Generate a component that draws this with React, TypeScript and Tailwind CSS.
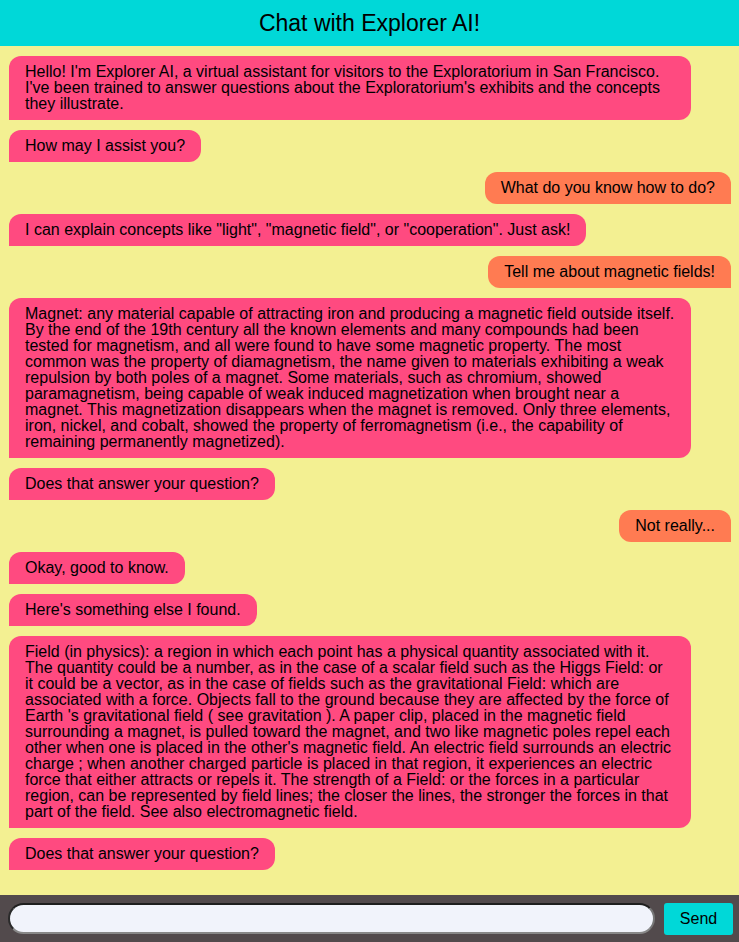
import { useState } from "react";

type Msg = { from: "bot" | "user"; text: string };

const messages: Msg[] = [
  {
    from: "bot",
    text: "Hello! I'm Explorer AI, a virtual assistant for visitors to the Exploratorium in San Francisco. I've been trained to answer questions about the Exploratorium's exhibits and the concepts they illustrate.",
  },
  { from: "bot", text: "How may I assist you?" },
  { from: "user", text: "What do you know how to do?" },
  {
    from: "bot",
    text: 'I can explain concepts like "light", "magnetic field", or "cooperation". Just ask!',
  },
  { from: "user", text: "Tell me about magnetic fields!" },
  {
    from: "bot",
    text: "Magnet: any material capable of attracting iron and producing a magnetic field outside itself. By the end of the 19th century all the known elements and many compounds had been tested for magnetism, and all were found to have some magnetic property. The most common was the property of diamagnetism, the name given to materials exhibiting a weak repulsion by both poles of a magnet. Some materials, such as chromium, showed paramagnetism, being capable of weak induced magnetization when brought near a magnet. This magnetization disappears when the magnet is removed. Only three elements, iron, nickel, and cobalt, showed the property of ferromagnetism (i.e., the capability of remaining permanently magnetized).",
  },
  { from: "bot", text: "Does that answer your question?" },
  { from: "user", text: "Not really..." },
  { from: "bot", text: "Okay, good to know." },
  { from: "bot", text: "Here's something else I found." },
  {
    from: "bot",
    text: "Field (in physics): a region in which each point has a physical quantity associated with it. The quantity could be a number, as in the case of a scalar field such as the Higgs Field: or it could be a vector, as in the case of fields such as the gravitational Field: which are associated with a force. Objects fall to the ground because they are affected by the force of Earth 's gravitational field ( see gravitation ). A paper clip, placed in the magnetic field surrounding a magnet, is pulled toward the magnet, and two like magnetic poles repel each other when one is placed in the other's magnetic field. An electric field surrounds an electric charge ; when another charged particle is placed in that region, it experiences an electric force that either attracts or repels it. The strength of a Field: or the forces in a particular region, can be represented by field lines; the closer the lines, the stronger the forces in that part of the field. See also electromagnetic field.",
  },
  { from: "bot", text: "Does that answer your question?" },
];

export default function App() {
  const [draft, setDraft] = useState("");

  return (
    <div className="flex h-screen flex-col bg-[#f3f092] font-['Liberation_Sans',Arial,sans-serif] text-black">
      {/* Header */}
      <header className="flex h-[46px] shrink-0 items-center justify-center bg-[#00d8d8]">
        <h1 className="text-[23px] leading-none">Chat with Explorer AI!</h1>
      </header>

      {/* Messages */}
      <main className="flex flex-1 flex-col gap-[10px] overflow-hidden pt-[10px] pl-[9px] pr-[8px]">
        {messages.map((m, i) =>
          m.from === "bot" ? (
            <div key={i} className="flex justify-start">
              <div className="max-w-[682px] rounded-t-[12px] rounded-br-[12px] bg-[#ff4a80] px-4 py-2 text-[16px] leading-4">
                {m.text}
              </div>
            </div>
          ) : (
            <div key={i} className="flex justify-end">
              <div className="max-w-[682px] rounded-t-[12px] rounded-bl-[12px] bg-[#ff7b52] px-4 py-2 text-[16px] leading-4">
                {m.text}
              </div>
            </div>
          )
        )}
      </main>

      {/* Input bar */}
      <footer className="flex h-[47px] shrink-0 items-center gap-[9px] bg-[#524a4c] pl-[8px] pr-[6px]">
        <input
          value={draft}
          onChange={(e) => setDraft(e.target.value)}
          className="h-[31px] flex-1 rounded-full border-2 border-t-[#1e1e1e] border-l-[#2a2a2a] border-r-[#777] border-b-[#888] bg-[#f1f3fb] px-3 text-[16px] outline-none"
        />
        <button className="h-[32px] w-[69px] rounded-[3px] bg-[#00d8d8] text-[16px]">
          Send
        </button>
      </footer>
    </div>
  );
}
